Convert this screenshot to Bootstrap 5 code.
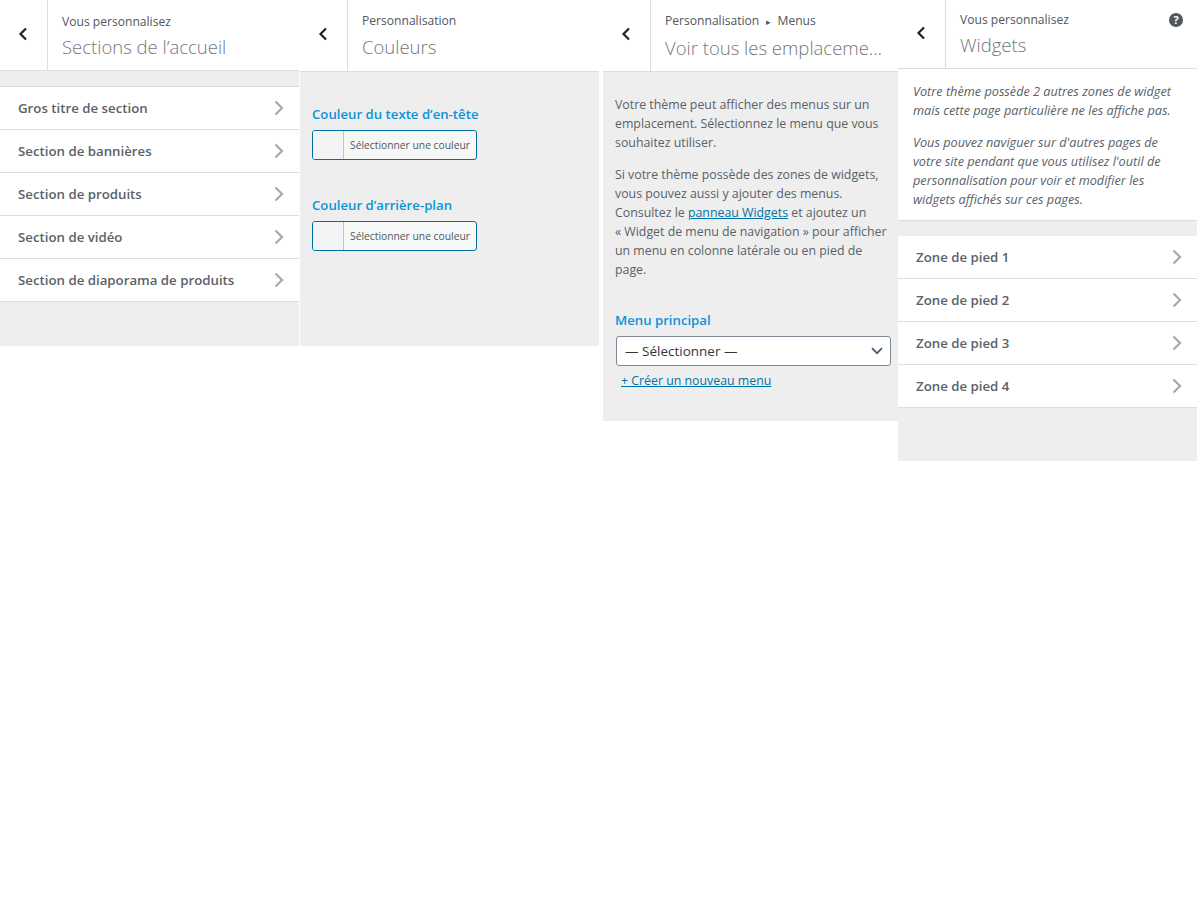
<!DOCTYPE html>
<html lang="fr">
<head>
    <meta charset="UTF-8">
    <meta name="viewport" content="width=device-width, initial-scale=1.0">
    <title>Personnalisation</title>

    <link href="https://cdn.jsdelivr.net/npm/bootstrap@5.3.0/dist/css/bootstrap.min.css" rel="stylesheet">
    <style>
        body {
            background: #fff;
            color: #50575e;
            font-family: "Open Sans", "Liberation Sans", sans-serif;
            font-size: 13px;
            line-height: 19px;
        }
        .panels { width: 1197px; }
        .wp-panel { background: #eee; flex: none; }
        .p1 { width: 299px; height: 346px; margin-right: 1px; }
        .p2 { width: 299px; height: 346px; margin-right: 4px; }
        .p3 { width: 295px; height: 421px; }
        .p4 { width: 299px; height: 461px; }

        .wp-head { background: #fff; border-bottom: 1px solid #ddd; height: 71px; }
        .p2 .wp-head, .p3 .wp-head { height: 72px; }
        .p4 .wp-head { height: 69px; }
        .back-btn { width: 48px; border-right: 1px solid #ddd; color: #1d2327; padding: 0 2px 3px 0; }
        .head-text { padding: 12px 0 0 14px; min-width: 0; }
        .p1 .head-text { padding-top: 13px; }
        .p4 .head-text { padding-top: 11px; }
        .head-small { font-size: 12.1px; line-height: 18px; color: #50575e; }
        .head-sep { font-size: 9px; margin: 0 3px 0 4px; }
        .head-title { font-size: 18.5px; font-weight: 300; line-height: 26px; margin-top: 4px; color: #72777c; white-space: nowrap; }
        .p1 .head-title, .p4 .head-title { margin-top: 3px; }
        .help-ico { top: 13px; right: 14px; }

        .sect-list { background: #fff; border-top: 1px solid #ddd; margin-top: 15px; }
        .sect-row { height: 43px; border-bottom: 1px solid #ddd; padding: 0 15px 0 18px; font-size: 13.25px; font-weight: 600; color: #5a6168; }
        .p4 .sect-list { border-top: 0; }

        .color-area { padding: 32px 12px 0; }
        .wp-label { color: #0a94d8; font-size: 13.2px; font-weight: 600; line-height: 20px; margin-bottom: 6px; }
        .label-next { margin-top: 35px; }
        .color-btn { width: 165px; height: 30px; background: #f6f7f7; border: 1px solid #0071a1; border-radius: 3px; font-size: 10.3px; color: #50575e; overflow: hidden; }
        .color-swatch { width: 31px; height: 100%; background: #f3f4f6; border-right: 1px solid #c3c4c7; }
        .color-txt { padding-left: 6px; }
        .wp-select { height: 30px; width: 275px; margin-left: 1px; background: #fff; border: 1px solid #7e8993; border-radius: 3px; padding: 0 7px 0 8px; color: #32373c; font-size: 13.5px; }
        .wp-link { color: #0073aa; }
        .label-menu { margin-top: 31px; margin-bottom: 6px; }
        .new-menu { margin: 5px 0 0 6px; }
        .notice-box { background: #fff; border-bottom: 1px solid #ddd; padding: 13px 14px 0 15px; height: 152px; font-style: italic; font-size: 12.7px; color: #5a6168; }
        .notice-box p { margin: 0 0 13px; }
        .copy-area { padding: 23px 8px 0 12px; font-size: 12.35px; color: #5a6168; }
        .copy-area p { margin: 0 0 13px; }
    </style>
</head>
<body>
    <div class="panels d-flex align-items-start">

        <!-- Sections de l'accueil -->
        <div class="wp-panel p1">
            <div class="wp-head d-flex">
                <div class="back-btn d-flex align-items-center justify-content-center"><svg width="10" height="14" viewBox="0 0 10 14"><path d="M8 1.5 2.5 7 8 12.500" fill="none" stroke="currentColor" stroke-width="2.200"/></svg></div>
                <div class="head-text">
                    <div class="head-small">Vous personnalisez</div>
                    <div class="head-title">Sections de l’accueil</div>
                </div>
            </div>
            <div class="sect-list">
                <div class="sect-row d-flex align-items-center justify-content-between">Gros titre de section <svg width="10" height="16" viewBox="0 0 10 16"><path d="M1.500 1.500 8 8l-6.500 6.500" fill="none" stroke="#a7aaad" stroke-width="2.200"/></svg></div>
                <div class="sect-row d-flex align-items-center justify-content-between">Section de bannières <svg width="10" height="16" viewBox="0 0 10 16"><path d="M1.500 1.500 8 8l-6.500 6.500" fill="none" stroke="#a7aaad" stroke-width="2.200"/></svg></div>
                <div class="sect-row d-flex align-items-center justify-content-between">Section de produits <svg width="10" height="16" viewBox="0 0 10 16"><path d="M1.500 1.500 8 8l-6.500 6.500" fill="none" stroke="#a7aaad" stroke-width="2.200"/></svg></div>
                <div class="sect-row d-flex align-items-center justify-content-between">Section de vidéo <svg width="10" height="16" viewBox="0 0 10 16"><path d="M1.500 1.500 8 8l-6.500 6.500" fill="none" stroke="#a7aaad" stroke-width="2.200"/></svg></div>
                <div class="sect-row d-flex align-items-center justify-content-between">Section de diaporama de produits <svg width="10" height="16" viewBox="0 0 10 16"><path d="M1.500 1.500 8 8l-6.500 6.500" fill="none" stroke="#a7aaad" stroke-width="2.200"/></svg></div>
            </div>
        </div>

        <!-- Couleurs -->
        <div class="wp-panel p2">
            <div class="wp-head d-flex">
                <div class="back-btn d-flex align-items-center justify-content-center"><svg width="10" height="14" viewBox="0 0 10 14"><path d="M8 1.5 2.5 7 8 12.500" fill="none" stroke="currentColor" stroke-width="2.200"/></svg></div>
                <div class="head-text">
                    <div class="head-small">Personnalisation</div>
                    <div class="head-title">Couleurs</div>
                </div>
            </div>
            <div class="color-area">
                <div class="wp-label">Couleur du texte d’en-tête</div>
                <div class="color-btn d-flex align-items-center"><span class="color-swatch"></span><span class="color-txt">Sélectionner une couleur</span></div>
                <div class="wp-label label-next">Couleur d’arrière-plan</div>
                <div class="color-btn d-flex align-items-center"><span class="color-swatch"></span><span class="color-txt">Sélectionner une couleur</span></div>
            </div>
        </div>

        <!-- Menus -->
        <div class="wp-panel p3">
            <div class="wp-head d-flex">
                <div class="back-btn d-flex align-items-center justify-content-center"><svg width="10" height="14" viewBox="0 0 10 14"><path d="M8 1.5 2.5 7 8 12.500" fill="none" stroke="currentColor" stroke-width="2.200"/></svg></div>
                <div class="head-text">
                    <div class="head-small">Personnalisation <span class="head-sep">▸</span> Menus</div>
                    <div class="head-title">Voir tous les emplaceme…</div>
                </div>
            </div>
            <div class="copy-area">
                <p>Votre thème peut afficher des menus sur un emplacement. Sélectionnez le menu que vous souhaitez utiliser.</p>
                <p>Si votre thème possède des zones de widgets, vous pouvez aussi y ajouter des menus. Consultez le <a class="wp-link" href="#">panneau Widgets</a> et ajoutez un «&nbsp;Widget de menu de navigation&nbsp;» pour afficher un menu en colonne latérale ou en pied de page.</p>
                <div class="wp-label label-menu">Menu principal</div>
                <div class="wp-select d-flex align-items-center justify-content-between">— Sélectionner — <svg width="12" height="8" viewBox="0 0 12 8"><path d="M1 1.200 6 6.200l5-5" fill="none" stroke="#50575e" stroke-width="1.700"/></svg></div>
                <div class="new-menu"><a class="wp-link" href="#">+ Créer un nouveau menu</a></div>
            </div>
        </div>

        <!-- Widgets -->
        <div class="wp-panel p4">
            <div class="wp-head d-flex position-relative">
                <div class="back-btn d-flex align-items-center justify-content-center"><svg width="10" height="14" viewBox="0 0 10 14"><path d="M8 1.5 2.5 7 8 12.500" fill="none" stroke="currentColor" stroke-width="2.200"/></svg></div>
                <div class="head-text">
                    <div class="head-small">Vous personnalisez</div>
                    <div class="head-title">Widgets</div>
                </div>
                <svg class="help-ico position-absolute" width="14" height="14" viewBox="0 0 14 14"><circle cx="7" cy="7" r="7" fill="#50575e"/><text x="7" y="11" text-anchor="middle" font-size="11" font-weight="700" font-family="Open Sans" fill="#fff">?</text></svg>
            </div>
            <div class="notice-box">
                <p>Votre thème possède 2 autres zones de widget mais cette page particulière ne les affiche pas.</p>
                <p>Vous pouvez naviguer sur d'autres pages de votre site pendant que vous utilisez l'outil de personnalisation pour voir et modifier les widgets affichés sur ces pages.</p>
            </div>
            <div class="sect-list">
                <div class="sect-row d-flex align-items-center justify-content-between">Zone de pied 1 <svg width="10" height="16" viewBox="0 0 10 16"><path d="M1.500 1.500 8 8l-6.500 6.500" fill="none" stroke="#a7aaad" stroke-width="2.200"/></svg></div>
                <div class="sect-row d-flex align-items-center justify-content-between">Zone de pied 2 <svg width="10" height="16" viewBox="0 0 10 16"><path d="M1.500 1.500 8 8l-6.500 6.500" fill="none" stroke="#a7aaad" stroke-width="2.200"/></svg></div>
                <div class="sect-row d-flex align-items-center justify-content-between">Zone de pied 3 <svg width="10" height="16" viewBox="0 0 10 16"><path d="M1.500 1.500 8 8l-6.500 6.500" fill="none" stroke="#a7aaad" stroke-width="2.200"/></svg></div>
                <div class="sect-row d-flex align-items-center justify-content-between">Zone de pied 4 <svg width="10" height="16" viewBox="0 0 10 16"><path d="M1.500 1.500 8 8l-6.500 6.500" fill="none" stroke="#a7aaad" stroke-width="2.200"/></svg></div>
            </div>
        </div>

    </div>

    <script src="https://cdn.jsdelivr.net/npm/bootstrap@5.3.0/dist/js/bootstrap.bundle.min.js"></script>
</body>
</html>
